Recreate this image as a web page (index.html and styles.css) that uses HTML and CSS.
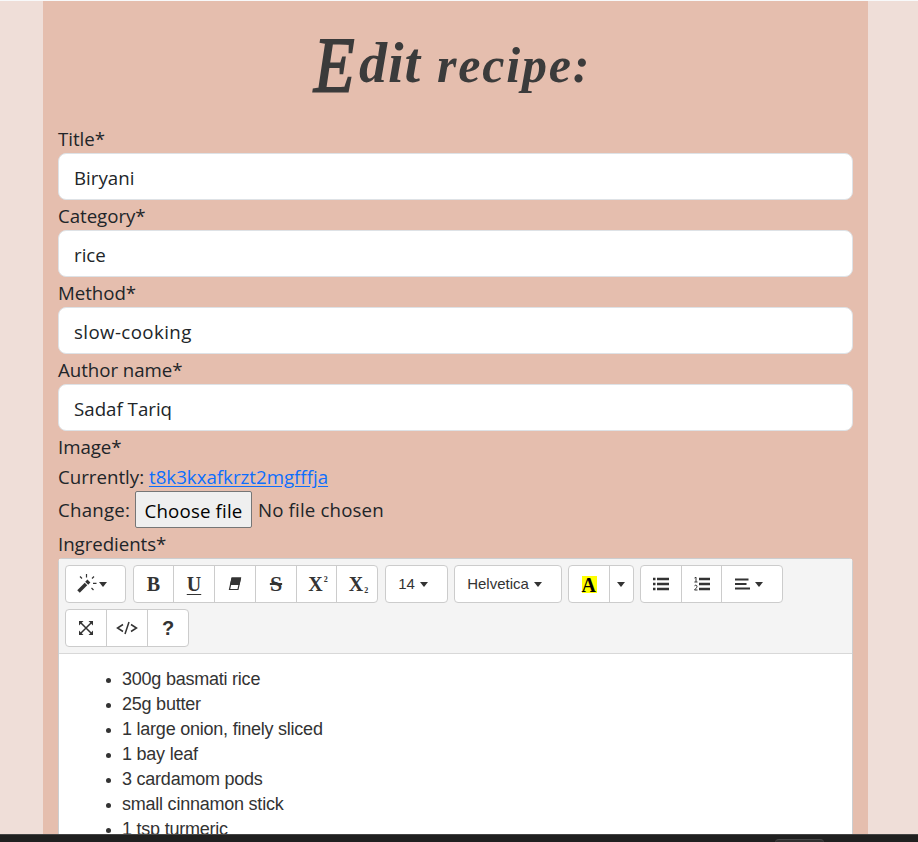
FILE: index.html
```html
<!DOCTYPE html>
<html lang="en">
<head>
<meta charset="utf-8">
<title>Edit recipe</title>
<link rel="stylesheet" href="styles.css">
</head>
<body>
<main class="panel">
  <h1><span class="initial">E</span><span class="first">dit</span> <span class="second">recipe:</span></h1>
  <form>
    <label for="title">Title*</label>
    <input class="field" id="title" type="text" value="Biryani">
    <label for="category">Category*</label>
    <input class="field" id="category" type="text" value="rice">
    <label for="method">Method*</label>
    <input class="field wide" id="method" type="text" value="slow-cooking">
    <label for="author">Author name*</label>
    <input class="field" id="author" type="text" value="Sadaf Tariq">
    <label>Image*</label>
    <div class="line">Currently: <a href="#">t8k3kxafkrzt2mgfffja</a></div>
    <div class="upload"><span class="change">Change:</span><button type="button" class="choose">Choose file</button><span class="none">No file chosen</span></div>
    <label class="last">Ingredients*</label>
    <section class="editor">
      <div class="toolbar">
        <div class="group g-magic"><div class="btn">
          <svg width="20" height="20" viewBox="0 0 20 20"><path d="M1.500 17.500 9 10" stroke="#333" stroke-width="3.600"/><path d="m9.700 9.300 2.200-2.200" stroke="#333" stroke-width="4.200"/><path d="m3 2.500 2 2M9.500 0v3.500M17 2.500l-2 2M16 9.300h3.500M14.500 14l2 2" stroke="#333" stroke-width="1.200"/></svg><i class="caret"></i></div></div>
        <div class="group g-font">
          <div class="btn serif">B</div>
          <div class="btn serif under">U</div>
          <div class="btn"><svg width="16" height="16" viewBox="0 0 16 16"><path d="M5 2h8.500L11 13.500H2.500z" fill="#fff" stroke="#333" stroke-width="1.200"/><path d="M4.700 1.500h9.400L12.500 9H2.900z" fill="#333"/></svg></div>
          <div class="btn serif strike">S</div>
          <div class="btn serif script">X<sup>2</sup></div>
          <div class="btn serif script">X<sub>2</sub></div>
        </div>
        <div class="group g-size"><div class="btn">14<i class="caret"></i></div></div>
        <div class="group g-name"><div class="btn">Helvetica<i class="caret"></i></div></div>
        <div class="group g-color"><div class="btn"><span class="mark">A</span></div><div class="btn"><i class="caret solo"></i></div></div>
        <div class="group g-para">
          <div class="btn"><svg width="16" height="14" viewBox="0 0 16 14"><path d="M4 2h12M4 7h12M4 12h12" stroke="#333" stroke-width="2.300"/><path d="M0 2h2.500M0 7h2.500M0 12h2.500" stroke="#333" stroke-width="2.500"/></svg></div>
          <div class="btn"><svg width="16" height="14" viewBox="0 0 16 14"><path d="M5 2h11M5 7h11M5 12h11" stroke="#333" stroke-width="2.300"/><path d="m.5 1 1.500-.8V5M.4 5H3.500M.5 8.800c.5-1 2.600-.8 2.500.5C3 10.700 1.500 11.600.5 13H3.500" fill="none" stroke="#333"/></svg></div>
          <div class="btn"><svg width="15" height="14" viewBox="0 0 15 14"><path d="M0 2.500h13.500M0 7h11.500M0 11.500h15" stroke="#333" stroke-width="2"/></svg><i class="caret"></i></div>
        </div>
        <div class="group g-view">
          <div class="btn"><svg width="14" height="14" viewBox="0 0 14 14"><path d="m2 2 10 10M12 2 2 12" stroke="#333" stroke-width="1.500"/><path d="M0 0h4.500L0 4.500zM14 0v4.500L9.500 0zM0 14V9.500L4.500 14zM14 14H9.500L14 9.500z" fill="#333"/></svg></div>
          <div class="btn"><svg width="22" height="14" viewBox="0 0 22 14"><path d="M7 3.500 1.500 7 7 10.500M15 3.500l5.500 3.500-5.500 3.500M13 1 9 13" fill="none" stroke="#333" stroke-width="1.500"/></svg></div>
          <div class="btn help">?</div>
        </div>
      </div>
      <ul>
        <li>300g basmati rice</li>
        <li>25g butter</li>
        <li>1 large onion, finely sliced</li>
        <li>1 bay leaf</li>
        <li>3 cardamom pods</li>
        <li>small cinnamon stick</li>
        <li>1 tsp turmeric</li>
      </ul>
    </section>
  </form>
</main>
<footer><span class="tab"></span></footer>
</body>
</html>
```
FILE: styles.css
```css
* { box-sizing: border-box; }
body {
  margin: 0;
  height: 842px;
  overflow: hidden;
  background: #efded8;
  border-top: 1px solid #f8f9fa;
  color: #212529;
  font: 18.7px/30px "Open Sans", "Noto Sans", sans-serif;
  display: flex;
  flex-direction: column;
}
.panel {
  width: 825px;
  height: 833px;
  flex: none;
  margin-left: 43px;
  padding: 0 15px;
  background: #e5beae;
  overflow: hidden;
}
h1 {
  display: flex;
  align-items: baseline;
  margin: 0;
  height: 123px;
  padding: 19px 0 0 256px;
  font: italic bold 50px/72px "Liberation Serif", cursive;
  color: #3b3b3b;
  white-space: nowrap;
}
.initial {
  font-size: 78px;
  font-weight: normal;
  width: 45px;
  line-height: 72px;
  margin-bottom: -10px;
  transform: translateY(9px) scaleX(0.85);
  transform-origin: left;
  -webkit-text-stroke: 2px #3b3b3b;
}
.first { width: 78px; font-size: 56px; letter-spacing: 1px; }
.second { letter-spacing: 1.8px; }
label { display: block; height: 30px; letter-spacing: -0.05px; }
.field {
  display: block;
  width: 795px;
  height: 47px;
  margin: -1px 0 1px;
  padding: 1px 15px 0;
  border: 1px solid #dee2e6;
  border-radius: 8px;
  background: #fff;
  color: #212529;
  font: inherit;
}
.wide { letter-spacing: 0.4px; }
.line { height: 30px; }
a { color: #0d6efd; text-underline-offset: 2px; }
.upload { height: 37px; margin-top: -1px; display: flex; align-items: center; }
.change { width: 77px; letter-spacing: 0.2px; }
.none { letter-spacing: 0.15px; }
.choose {
  width: 117px;
  height: 37px;
  margin-right: 6px;
  padding: 2px 0 0;
  border: 1px solid #767676;
  border-radius: 2px;
  background: #efefef;
  color: #000;
  font: inherit;
  letter-spacing: 0.15px;
  white-space: nowrap;
}
label.last { height: 30px; padding-top: 1px; }
.editor {
  width: 795px;
  height: 320px;
  background: #fff;
  border: 1px solid #ccced0;
  border-radius: 4px 4px 0 0;
  color: #333;
  font-family: "Liberation Sans", sans-serif;
}
.toolbar {
  display: flex;
  flex-wrap: wrap;
  align-content: flex-start;
  gap: 6px 0;
  height: 95px;
  padding: 6px;
  background: #f4f4f4;
  border-bottom: 1px solid #d8d8d8;
  font-size: 15px;
}
.group {
  display: flex;
  height: 38px;
  border: 1px solid #ccc;
  border-radius: 4px;
  background: #fff;
  margin-right: 7px;
}
.btn {
  flex: 1 1 0;
  min-width: 0;
  display: flex;
  align-items: center;
  justify-content: center;
}
.btn + .btn { border-left: 1px solid #ccc; }
.g-magic { width: 61px; }
.g-font { width: 245px; }
.g-font .btn { flex: 0 0 41px; }
.g-font .btn:first-child { flex-basis: 39px; }
.g-font .btn:nth-child(5) { flex-basis: 40px; }
.g-font .btn:last-child { flex: 1 1 0; }
.g-size { width: 63px; margin-right: 6px; }
.g-size .btn, .g-name .btn { padding-right: 7px; }
.g-name { width: 108px; margin-right: 6px; }
.g-color { width: 66px; margin-right: 6px; }
.g-color .btn:first-child { flex: 0 0 40px; }
.g-para { width: 143px; }
.g-para .btn { flex: 0 0 40px; }
.g-para .btn:last-child { flex: 1; padding-right: 6px; }
.g-view { width: 124px; }
.g-magic .btn { padding-right: 8px; }
.g-magic .caret { margin-left: 2px; }
.caret {
  margin-left: 5px;
  border: 4px solid transparent;
  border-top: 5px solid #333;
  border-bottom: 0;
}
.caret.solo { margin: 0 2px 0 0; }
.serif { font: bold 20px/24px "Liberation Serif", serif; }
.under { text-decoration: underline; text-decoration-thickness: 1px; text-underline-offset: 3px; }
.strike { font-size: 22px; text-decoration: line-through; text-decoration-thickness: 2px; }
.script { padding-left: 3px; }
sup, sub { font-size: 8px; line-height: 8px; margin-left: 1px; }
sup { margin-top: -9px; }
sub { margin-top: 13px; }
.mark {
  width: 15px;
  height: 17px;
  background: #ff0;
  color: #000;
  font: bold 20px/18px "Liberation Serif", serif;
}
.help { font: bold 20px/24px "Liberation Sans", sans-serif; }
ul {
  margin: 0;
  padding: 13px 0 0 63px;
  font-size: 18px;
  line-height: 25px;
  letter-spacing: -0.23px;
}
li::marker { font-size: 16px; }
footer {
  flex: none;
  height: 8px;
  background: #202020;
  border-top: 1px solid #444;
  padding: 4px 0 0 775px;
}
.tab {
  display: block;
  width: 49px;
  height: 4px;
  background: #303030;
  border-top: 1px solid #484848;
  border-radius: 4px 4px 0 0;
}
```
